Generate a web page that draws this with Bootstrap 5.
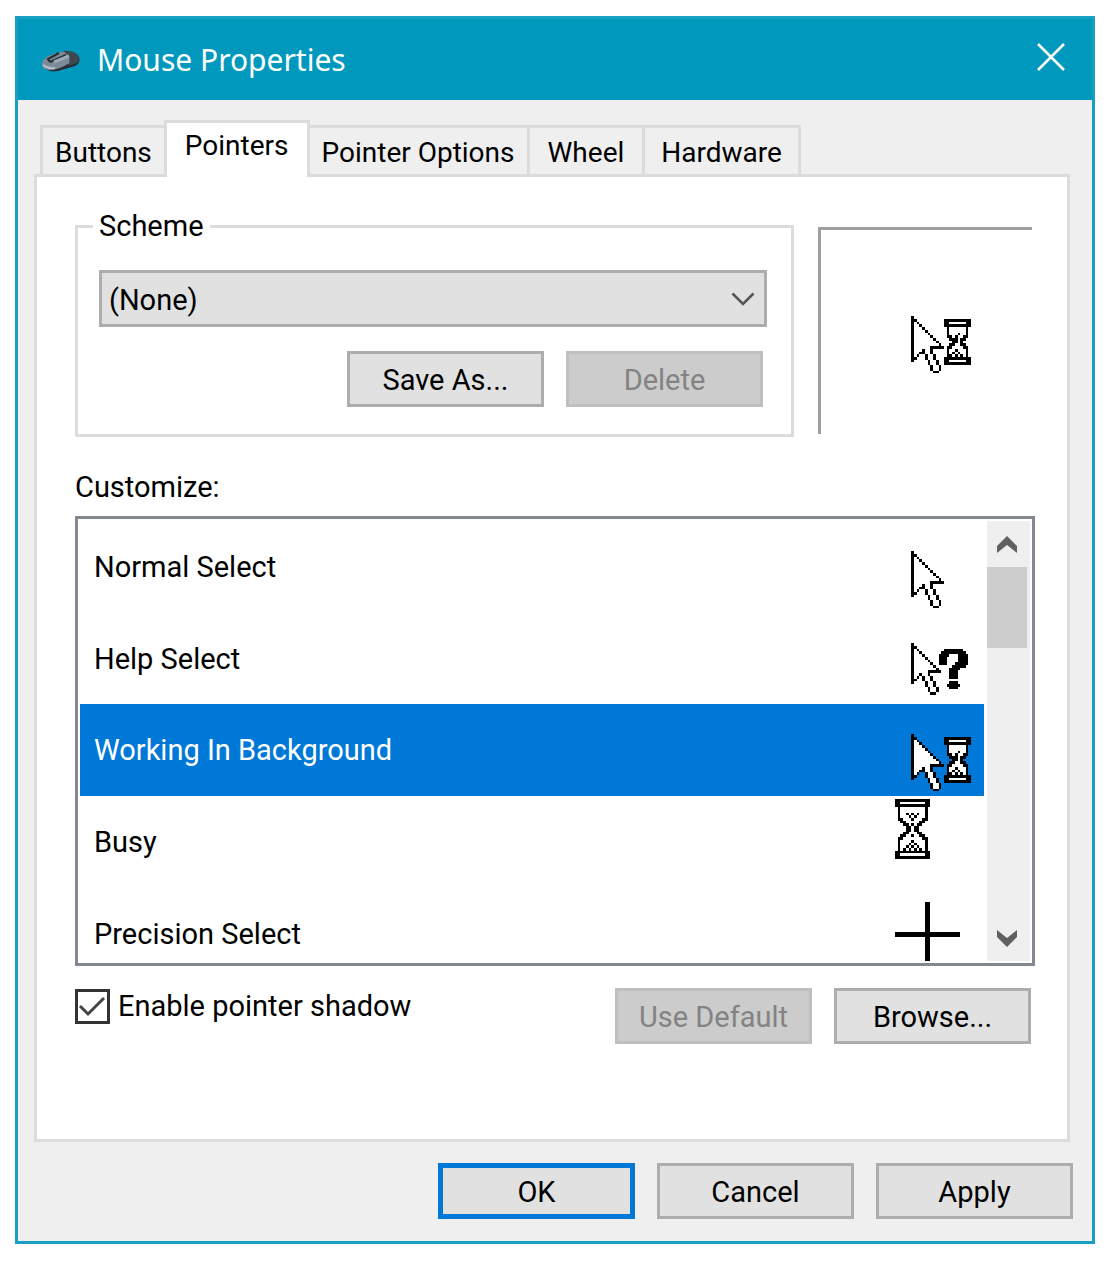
<!DOCTYPE html>
<html lang="en">
<head>
<meta charset="utf-8">
<meta name="viewport" content="width=device-width, initial-scale=1">
<title>Mouse Properties</title>
<link href="https://cdn.jsdelivr.net/npm/bootstrap@5.3.0/dist/css/bootstrap.min.css" rel="stylesheet">
<style>
  body { background: #fff; color: #000; font: 29px/36px Roboto, "Liberation Sans", sans-serif; padding: 16px 13px 16px 15px; }
  .dialog { border: 3px solid #18a0c0; background: #efefef; }
  .titlebar { background: #0099bd; color: #fff; height: 81px; padding: 0 27px 0 23px; }
  .titlebar h1 { font: 30px/36px "Noto Sans", "Open Sans", sans-serif; margin: 0 0 0 16px; }
  .titlebar button { background: none; border: 0; padding: 0 0 5px; line-height: 0; }
  .sheet { padding: 20px 22px 0 16px; }
  .nav-tabs { border: 0; padding-left: 6px; position: relative; margin-bottom: -3px; }
  .nav-tabs .nav-link { color: #000; background: #efefef; border: 3px solid #dcdcdc; border-left-width: 0; border-radius: 0; margin: 0; height: 52px; padding: 3px 12px 0; font-size: 28px; line-height: 36px; }
  .nav-tabs .nav-item:first-child .nav-link { border-left-width: 3px; }
  .nav-tabs .nav-link.roomy { padding: 3px 18px 0; }
  .nav-tabs .nav-link.active { color: #000; background: #fff; border-color: #dcdcdc; border-width: 3px 3px 0; height: 57px; margin-left: -3px; padding: 0 18px 8px; }
  .nav-tabs .nav-link:hover { border-color: #dcdcdc; }
  .page-panel { background: #fff; border: 3px solid #dcdcdc; padding: 31px 32px 95px 38px; }
  .group { border: 3px solid #dcdcdc; padding: 26px 24px 27px 21px; }
  .group legend { float: none; width: auto; font-size: inherit; line-height: 36px; margin: 0 0 0 -6px; padding: 0 6px; }
  .form-select { background-color: #e1e1e1; border: 3px solid #adadad; border-radius: 0; color: #000; font-size: 29px; line-height: 36px; height: 57px; padding: 6px 48px 4px 7px;
    background-image: url("data:image/svg+xml,%3Csvg xmlns='http://www.w3.org/2000/svg' viewBox='0 0 24 16'%3E%3Cpath d='M1.500 2.500 12 13 22.500 2.500' fill='none' stroke='%23555' stroke-width='2.600'/%3E%3C/svg%3E"); background-size: 24px 16px; background-position: right 9px center; }
  .btn-win { background: #e1e1e1; border: 3px solid #adadad; border-radius: 0; color: #000; font-size: 29px; line-height: 36px; width: 197px; height: 56px; padding: 6px 0 4px; }
  .btn-win:hover { background: #e5f1fb; border-color: #0078d7; color: #000; }
  .btn-win:disabled { background: #ccc; border-color: #bfbfbf; color: #838383; opacity: 1; }
  .btn-win.default { border: 5px solid #0078d7; padding: 4px 0 2px; }
  .pair { gap: 22px; }
  .preview { border: 3px solid #a0a0a0; border-width: 3px 0 0 3px; width: 214px; margin: 19px 3px 3px 24px; padding-left: 23px; }
  .listframe { border: 3px solid #828790; padding: 2px; height: 450px; margin-top: 11px; }
  .list-group { overflow: hidden; border-radius: 0; }
  .list-group-item { border: 0; color: #000; background: #fff; height: 92px; padding: 0 2px 0 14px; flex: none; }
  .list-group-item .lbl { line-height: 92px; }
  .list-group-item.active { background: #0078d7; margin: 0; color: #fff; }
  .pix { width: 87px; height: 87px; flex: none; shape-rendering: crispEdges; }
  .list-group-item .pix { margin-top: 3px; }
  .scroller { background: #efefef; width: 43px; margin-left: 3px; flex: none; }
  .scroller button { border: 0; background: none; padding: 0; height: 46px; width: 40px; line-height: 0; }
  .thumb { background: #cdcdcd; width: 40px; height: 81px; }
  .options-row { margin-top: 22px; }
  input.form-check-input[type=checkbox] { width: 35px; height: 35px; border: 3px solid #333; border-radius: 0; margin: 0; }
  input.form-check-input[type=checkbox]:checked { background-color: #fff; border-color: #333; background-size: 100% 100%;
    background-image: url("data:image/svg+xml,%3Csvg xmlns='http://www.w3.org/2000/svg' viewBox='0 0 29 29'%3E%3Cpath d='M2 14 10 22 26 6' fill='none' stroke='%23444' stroke-width='3'/%3E%3C/svg%3E"); }
  .actions { padding: 21px 19px 22px 16px; }
</style>
</head>
<body>
<main class="dialog">
  <header class="titlebar d-flex align-items-center justify-content-between">
    <div class="d-flex align-items-center">
      <svg width="40" height="24" viewBox="0 0 40 24" aria-hidden="true">
        <path d="M3 17Q5 25 17 23L34 18Q40 15 38 9L20 11Z" fill="#272d32"/>
        <path d="M1 17Q0 11 10 7Q20 2 31 4L37 8Q37 13 27 16Q17 22 8 22Q1 21 1 17Z" fill="#7c8b98"/>
        <path d="M22 3Q31 2 37 7Q40 11 36 15L27 18Q32 10 22 3Z" fill="#3d474f"/>
        <path d="M9 14 25 7M18 5 7 11 9 14" fill="none" stroke="#252c32" stroke-width="2"/>
        <path d="M13 14 28 8" fill="none" stroke="#9aa9b8" stroke-width="3"/>
        <path d="M2 17Q7 21 14 20" fill="none" stroke="#b5c0c9" stroke-width="2"/>
      </svg>
      <h1>Mouse Properties</h1>
    </div>
    <button type="button" aria-label="Close">
      <svg width="28" height="28" viewBox="0 0 28 28"><path d="M1 1 27 27M27 1 1 27" stroke="#fff" stroke-width="2.500"/></svg>
    </button>
  </header>

  <section class="sheet">
    <ul class="nav nav-tabs align-items-end" role="tablist">
      <li class="nav-item"><button class="nav-link" type="button" role="tab">Buttons</button></li>
      <li class="nav-item"><button class="nav-link active" type="button" role="tab" aria-selected="true">Pointers</button></li>
      <li class="nav-item"><button class="nav-link" type="button" role="tab">Pointer Options</button></li>
      <li class="nav-item"><button class="nav-link roomy" type="button" role="tab">Wheel</button></li>
      <li class="nav-item"><button class="nav-link px-3" type="button" role="tab">Hardware</button></li>
    </ul>

    <div class="page-panel">
      <div class="d-flex">
        <fieldset class="group flex-grow-1">
          <legend>Scheme</legend>
          <select class="form-select" aria-label="Scheme"><option>(None)</option></select>
          <div class="d-flex justify-content-end pair pt-4 pe-1">
            <button class="btn btn-win" type="button">Save As...</button>
            <button class="btn btn-win" type="button" disabled>Delete</button>
          </div>
        </fieldset>
        <div class="preview d-flex align-items-center justify-content-center">
          <svg class="pix" viewBox="0 0 32 32" data-cursor="working"></svg>
        </div>
      </div>

      <div id="customize" class="mt-4 pt-2">Customize:</div>
      <div class="listframe d-flex">
        <div class="list-group flex-grow-1" role="listbox" aria-labelledby="customize">
          <div class="list-group-item d-flex justify-content-between" role="option"><span class="lbl">Normal Select</span><svg class="pix" viewBox="0 0 32 32" data-cursor="normal"></svg></div>
          <div class="list-group-item d-flex justify-content-between" role="option"><span class="lbl">Help Select</span><svg class="pix" viewBox="0 0 32 32" data-cursor="help"></svg></div>
          <div class="list-group-item active d-flex justify-content-between" role="option" aria-selected="true"><span class="lbl">Working In Background</span><svg class="pix" viewBox="0 0 32 32" data-cursor="working"></svg></div>
          <div class="list-group-item d-flex justify-content-between" role="option"><span class="lbl">Busy</span><svg class="pix" viewBox="0 0 32 32" data-cursor="busy"></svg></div>
          <div class="list-group-item d-flex justify-content-between" role="option"><span class="lbl">Precision Select</span><svg class="pix" viewBox="0 0 32 32"><path d="M0 15H24V17H0ZM11 4H13V28H11Z"/></svg></div>
        </div>
        <div class="scroller d-flex flex-column">
          <button type="button" aria-label="Scroll up"><svg width="20" height="17" viewBox="0 0 20 17"><path d="M0 10 10 0 20 10V17L10 9 0 17Z" fill="#606060"/></svg></button>
          <div class="thumb"></div>
          <button class="mt-auto" type="button" aria-label="Scroll down"><svg width="20" height="17" viewBox="0 0 20 17"><path d="M0 7 10 17 20 7V0L10 8 0 0Z" fill="#606060"/></svg></button>
        </div>
      </div>

      <div class="options-row d-flex justify-content-between align-items-start pe-1">
        <div class="d-flex align-items-center">
          <input class="form-check-input" type="checkbox" id="shadow" checked>
          <label class="ps-2" for="shadow">Enable pointer shadow</label>
        </div>
        <div class="d-flex pair">
          <button class="btn btn-win" type="button" disabled>Use Default</button>
          <button class="btn btn-win" type="button">Browse...</button>
        </div>
      </div>
    </div>
  </section>

  <footer class="actions pair d-flex justify-content-end">
    <button class="btn btn-win default" type="button">OK</button>
    <button class="btn btn-win" type="button">Cancel</button>
    <button class="btn btn-win" type="button">Apply</button>
  </footer>
</main>

<script src="https://cdn.jsdelivr.net/npm/bootstrap@5.3.0/dist/js/bootstrap.bundle.min.js"></script>
<script>
// Cursor bitmaps: X is black, o is white, anything else is transparent.
const arrow = [
  "X", "XX", "XoX", "XooX", "XoooX", "XooooX", "XoooooX", "XooooooX", "XoooooooX", "XooooooooX",
  "XoooooooooX", "XooooooXXXXX", "XoooXooX", "XooXXooX", "XoX  XooX", "XX   XooX", "X     XooX",
  "      XooX", "       XooX", "       XooX", "        XX"];
const arrowSmall = [
  "X", "XX", "XoX", "XooX", "XoooX", "XooooX", "XoooooX", "XooooooX", "XoooooooX", "XooooooooX",
  "XoooooXXXXX", "XooXooX", "XoX XooX", "XX  XooX", "X    XooX", "     XooX", "      XooX", "      XooX", "       XX"];
const question = [
  "  XXXXXXX", " XXXXXXXXX", "XXXX   XXXX", "XXX    XXXX", "XXX    XXXX", "XXX   XXXXX", "     XXXXX",
  "    XXXX", "    XXX", "    XXX", "    XXX", "", "    XXX", "   XXXXX", "    XXX"];
const glassSmall = [
  "XXXXXXXXXX", "XXooooooXX", "XXXXXXXXXX", " XooooooX", " XooooooX", " XoooXooX", " XXoXooXX", "  XXXoXX",
  "   XXoX", "  XXooXX", " XXooooXX", " XooXoooX", " XoXoXooX", " XXoXoXoX", "XXXXXXXXXX", "XXooooooXX", "XXXXXXXXXX"];
const glass = [
  "XXXXXXXXXXXXX", "XXoooooooooXX", "XXXXXXXXXXXXX", " XoooooooooX", " XoooooooooX", " XooXoXoXooX", " XoooXoXoooX",
  " XXoooXoooXX", "  XXoooooXX", "   XXoXoXX", "    XXoXX", "    XXoXX", "   XXoooXX", "  XXooXooXX", " XXoooooooXX",
  " XooooXooooX", " XoooXoXoooX", " XooXoXoXooX", " XoXoXoXoXoX", "XXXXXXXXXXXXX", "XXoooooooooXX", "XXXXXXXXXXXXX"];
const cursors = {
  normal: [[arrow, 6, 10]],
  help: [[arrowSmall, 6, 10], [question, 16, 12]],
  working: [[arrow, 6, 10], [glassSmall, 18, 11]],
  busy: [[glass, 0, 0]]
};
document.querySelectorAll("[data-cursor]").forEach(svg => {
  const d = { X: "", o: "" };
  for (const [rows, x, y] of cursors[svg.dataset.cursor])
    rows.forEach((row, r) => [...row].forEach((c, i) => { if (c in d) d[c] += `M${x + i} ${y + r}h1v1h-1z`; }));
  svg.innerHTML = `<path fill="#fff" d="${d.o}"/><path fill="#000" d="${d.X}"/>`;
});
</script>
</body>
</html>
